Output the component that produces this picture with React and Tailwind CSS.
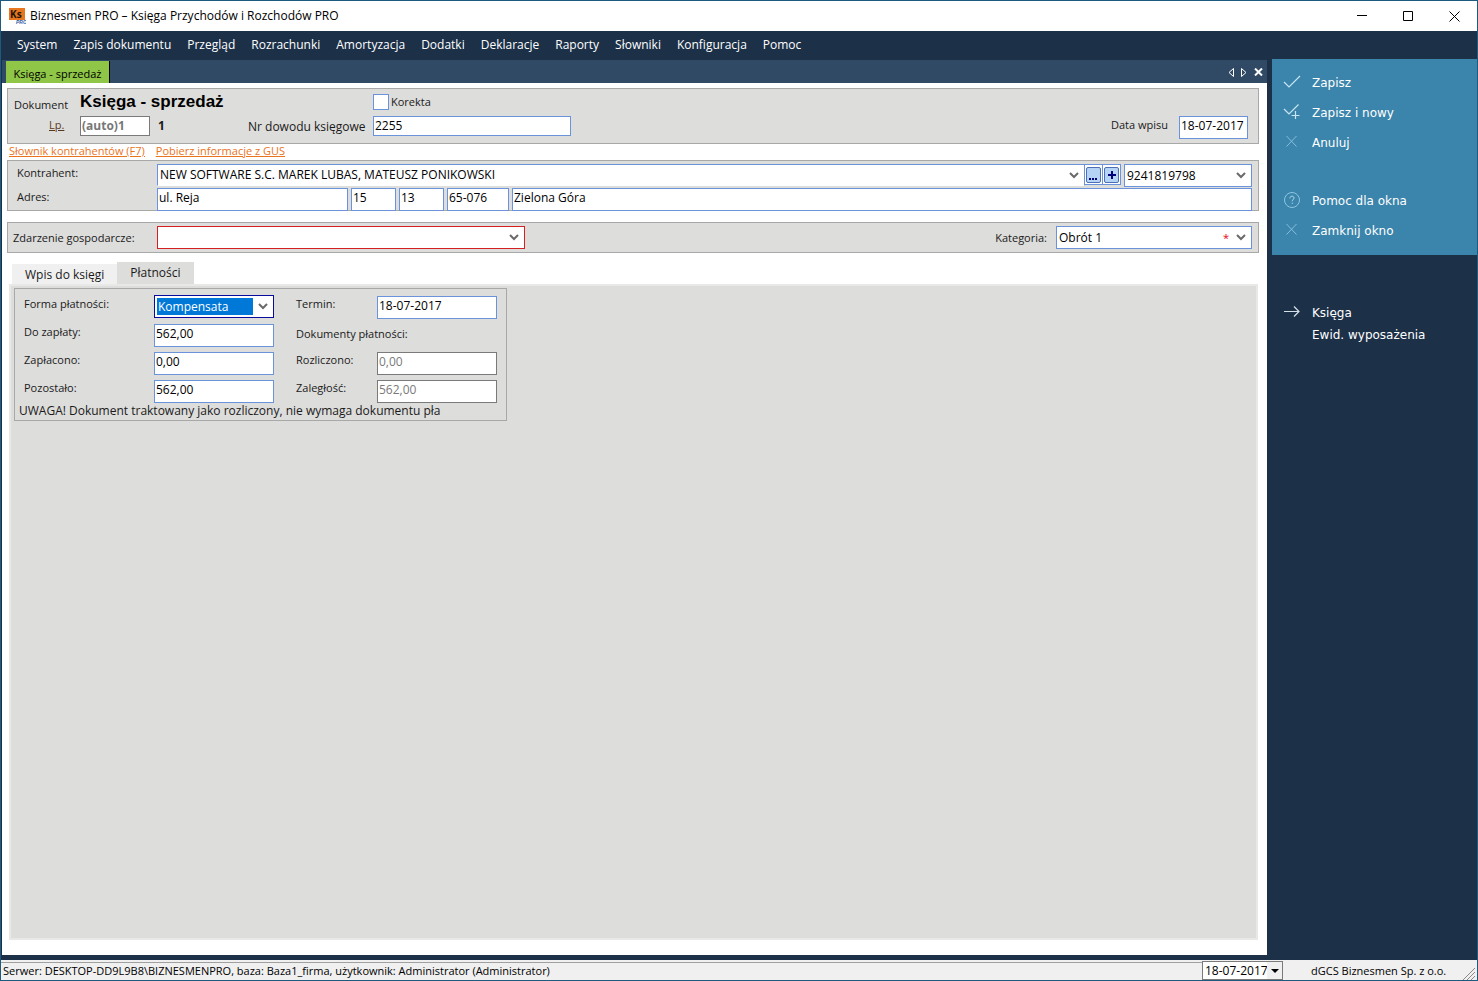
import { useState } from 'react';
import clsx from 'clsx';

const MENU = [
  'System', 'Zapis dokumentu', 'Przegląd', 'Rozrachunki', 'Amortyzacja', 'Dodatki',
  'Deklaracje', 'Raporty', 'Słowniki', 'Konfiguracja', 'Pomoc',
];

const ACTIONS = [
  { label: 'Zapisz', icon: 'check' },
  { label: 'Zapisz i nowy', icon: 'checkPlus' },
  { label: 'Anuluj', icon: 'cross' },
];

const WINDOW_ACTIONS = [
  { label: 'Pomoc dla okna', icon: 'help' },
  { label: 'Zamknij okno', icon: 'cross' },
];

function ActionIcon({ name }) {
  return (
    <svg width="18" height="18" viewBox="0 0 18 18" fill="none" stroke="currentColor" className="shrink-0">
      {name === 'check' && <path d="M1 8 L6 13 L17 2" stroke="#c8e6f4" strokeWidth="1.2" />}
      {name === 'checkPlus' && (
        <path d="M1 5 L6 10 L15.500 0.500 M12.500 7 V15 M8.500 11.500 H16.500" stroke="#c8e6f4" strokeWidth="1.2" />
      )}
      {name === 'cross' && <path d="M3.500 2 L13.500 12.500 M13.500 2 L3.500 12.500" stroke="#86bfdc" />}
      {name === 'help' && (
        <g stroke="#8cc6e2">
          <circle cx="9" cy="8" r="7.500" />
          <path d="M7 6.300 C7 4.700 8 4.200 9 4.200 C10.300 4.200 11 5 11 6 C11 7.500 9.200 7.500 9.200 9.300 M9.200 10.700 V11.900" stroke="#b5dcee" />
        </g>
      )}
      {name === 'arrow' && <path d="M1 7.500 H16 M11 2.500 L16 7.500 L11 12.500" stroke="#d5e0e8" strokeWidth="1.2" />}
    </svg>
  );
}

function Chevron() {
  return (
    <svg width="10" height="7" viewBox="0 0 10 7" className="pointer-events-none absolute top-1/2 right-1.5 -mt-1">
      <path d="M1 1 L5 5 L9 1" fill="none" stroke="#6a6a6a" strokeWidth="2" />
    </svg>
  );
}

function Field({ className, short, ...props }) {
  return (
    <input
      {...props}
      className={clsx(
        'min-w-0 border border-[#6a93dc] bg-white px-px text-[12px] text-black outline-none disabled:border-[#7a7a7a] disabled:text-[#7a7a7a]',
        short ? 'h-5 pb-0.5' : 'h-[23px] pb-1',
        className
      )}
    />
  );
}

function Select({ className, selectClass, children, star, ...props }) {
  return (
    <div className={clsx('relative flex text-[12px]', className)}>
      <select
        {...props}
        className={clsx('w-full appearance-none border bg-white pl-0.5 text-black outline-none', selectClass)}
      >
        {children}
      </select>
      {star && <span className="pointer-events-none absolute top-1 right-[23px] text-[11px] text-red-600">*</span>}
      <Chevron />
    </div>
  );
}

function Group({ className, children }) {
  return <section className={clsx('border border-[#a8a8a8] bg-[#dddddb]', className)}>{children}</section>;
}

function TitleBar() {
  return (
    <header className="flex h-[30px] shrink-0 items-center bg-white pl-2 text-[12px]">
      <svg width="17" height="17" viewBox="0 0 17 17" className="mr-1">
        <rect x="0" y="0" width="16" height="12" fill="#e8761f" />
        <text x="1" y="10" fontSize="10" fontWeight="bold" fontFamily="Open Sans, sans-serif" fill="#231408">Ks</text>
        <text x="7" y="16" fontSize="5" fontWeight="bold" fontStyle="italic" fontFamily="Liberation Sans, sans-serif" fill="#2b5aa8">PRO</text>
      </svg>
      <h1 className="flex-1 text-black">Biznesmen PRO – Księga Przychodów i Rozchodów PRO</h1>
      <button aria-label="Minimalizuj" className="flex h-full w-[46px] items-center justify-center">
        <svg width="10" height="10"><path d="M0 4.500 H10" stroke="#000" /></svg>
      </button>
      <button aria-label="Maksymalizuj" className="flex h-full w-[46px] items-center justify-center">
        <svg width="10" height="10"><path d="M.5 .5 H9.500 V9.500 H.5 Z" stroke="#000" fill="none" /></svg>
      </button>
      <button aria-label="Zamknij" className="flex h-full w-[46px] items-center justify-center">
        <svg width="11" height="11"><path d="M.5 .5 L10.500 10.500 M10.500 .5 L.5 10.500" stroke="#000" /></svg>
      </button>
    </header>
  );
}

function DocumentHeader() {
  return (
    <Group className="flex h-[56px] items-start pt-[3px] pr-2.5 pl-1.5">
      <div className="w-[66px]">
        <p className="mt-1 leading-[18px]">Dokument</p>
        <a href="#lp" className="ml-[35px] leading-[22px] text-[#5a3a1e] underline">Lp.</a>
      </div>
      <div className="w-[168px] text-[12px]">
        <h2 className="font-[Liberation_Sans,Arial,sans-serif] text-[17px] leading-5 font-bold text-black">Księga - sprzedaż</h2>
        <div className="mt-1 flex h-5 items-center gap-2">
          <input
            aria-label="Lp."
            defaultValue="(auto)1"
            className="h-5 w-[70px] border border-[#7a7a7a] bg-white px-px pb-0.5 font-bold text-[#777] outline-none"
          />
          <b>1</b>
        </div>
      </div>
      <label htmlFor="dowod" className="mt-[26px] w-[125px] text-[12px] leading-[18px]">Nr dowodu księgowe</label>
      <div>
        <label className="flex h-5 items-center gap-0.5">
          <input type="checkbox" className="size-4 appearance-none border border-[#6a93dc] bg-white checked:bg-[#6a93dc]" />
          Korekta
        </label>
        <Field id="dowod" short defaultValue="2255" className="mt-1 block w-[198px]" />
      </div>
      <div className="mt-6 ml-auto flex items-start gap-[11px]">
        <label htmlFor="data" className="leading-[18px]">Data wpisu</label>
        <Field id="data" defaultValue="18-07-2017" className="w-[69px]" />
      </div>
    </Group>
  );
}

function Contractor() {
  return (
    <Group className="grid h-[51px] grid-cols-[149px_1fr] gap-y-px pt-[3px] pr-1.5 leading-[18px]">
      <label htmlFor="kontrahent" className="pl-[9px]">Kontrahent:</label>
      <div className="flex h-[23px] gap-[3px]">
        <div className="flex min-w-0 flex-1">
          <Select id="kontrahent" className="flex-1" selectClass="h-[22px] border-[#6a93dc] border-b-white">
            <option>NEW SOFTWARE S.C. MAREK LUBAS, MATEUSZ PONIKOWSKI</option>
          </Select>
          <div className="flex h-[21px] w-9 shrink-0 items-center justify-around border border-l-0 border-[#6a93dc] bg-white">
            <button aria-label="Wybierz" className="flex h-4 w-[15px] items-end justify-center rounded-xs border border-[#4d6fb5] bg-[#b5d3f5]">
              <svg width="9" height="5"><path d="M0 1h2v2H0z M3 1h2v2H3z M6 1h2v2H6z" fill="#00007a" /></svg>
            </button>
            <span className="h-full w-px bg-[#6a93dc]" />
            <button aria-label="Dodaj" className="flex h-4 w-[15px] items-center justify-center rounded-xs border border-[#4d6fb5] bg-[#b5d3f5]">
              <svg width="8" height="8"><path d="M4 0V8M0 4H8" stroke="#00007a" strokeWidth="2" /></svg>
            </button>
          </div>
        </div>
        <Select aria-label="NIP" className="w-[128px]" selectClass="h-[23px] border-[#6a93dc]">
          <option>9241819798</option>
        </Select>
      </div>
      <label htmlFor="ulica" className="pl-[9px]">Adres:</label>
      <div className="flex gap-[3px]">
        <Field id="ulica" defaultValue="ul. Reja" className="w-[191px]" />
        <Field aria-label="Nr domu" defaultValue="15" className="w-[45px]" />
        <Field aria-label="Nr lokalu" defaultValue="13" className="w-[45px]" />
        <Field aria-label="Kod pocztowy" defaultValue="65-076" className="w-[62px]" />
        <Field aria-label="Miejscowość" defaultValue="Zielona Góra" className="flex-1" />
      </div>
    </Group>
  );
}

function Payments() {
  return (
    <Group className="h-[133px] w-[493px] pt-1.5 pl-[9px]">
      <div className="grid grid-cols-[130px_120px_22px_81px_120px] gap-y-1 leading-[18px]">
        <label htmlFor="forma">Forma płatności:</label>
        <div className="relative flex h-6 items-start text-[12px]">
          <select
            id="forma"
            className="h-[23px] w-full appearance-none border border-[#0a0a9c] bg-[#0078d7] bg-clip-content py-0.5 pr-[18px] pl-0.5 indent-px text-white outline-none [box-shadow:inset_0_0_0_2px_#fff,inset_-20px_0_0_0_#fff]"
          >
            <option>Kompensata</option>
          </select>
          <Chevron />
        </div>
        <span />
        <label htmlFor="termin">Termin:</label>
        <Field id="termin" defaultValue="18-07-2017" className="mt-px" />

        <label htmlFor="dozaplaty">Do zapłaty:</label>
        <Field id="dozaplaty" defaultValue="562,00" className="mt-px" />
        <span />
        <p className="col-span-2 mt-0.5">Dokumenty płatności:</p>

        <label htmlFor="zaplacono">Zapłacono:</label>
        <Field id="zaplacono" defaultValue="0,00" className="mt-px" />
        <span />
        <label htmlFor="rozliczono">Rozliczono:</label>
        <Field id="rozliczono" defaultValue="0,00" disabled className="mt-px" />

        <label htmlFor="pozostalo">Pozostało:</label>
        <Field id="pozostalo" defaultValue="562,00" className="mt-px" />
        <span />
        <label htmlFor="zaleglosc">Zaległość:</label>
        <Field id="zaleglosc" defaultValue="562,00" disabled className="mt-px" />
      </div>
      <p className="-ml-[5px] text-[12px] leading-4 whitespace-nowrap">
        UWAGA! Dokument traktowany jako rozliczony, nie wymaga dokumentu pła
      </p>
    </Group>
  );
}

function Sidebar() {
  const item = 'flex w-full items-center gap-[11px] pl-[11px] text-left';
  return (
    <aside className="w-[210px] shrink-0 pl-[5px] font-[DejaVu_Sans,Verdana,sans-serif] text-[12px] text-white">
      <div className="flex h-[196px] flex-col bg-[#3b84ab] pt-[9px]">
        {ACTIONS.map((a) => (
          <button key={a.label} className={clsx(item, 'h-[30px]')}>
            <ActionIcon name={a.icon} /> {a.label}
          </button>
        ))}
        <div className="h-7" />
        {WINDOW_ACTIONS.map((a) => (
          <button key={a.label} className={clsx(item, 'h-[30px]')}>
            <ActionIcon name={a.icon} /> {a.label}
          </button>
        ))}
      </div>
      <nav className="mt-[47px]">
        <a href="#ksiega" className={clsx(item, 'h-[22px]')}><ActionIcon name="arrow" /> Księga</a>
        <a href="#ewid" className={clsx(item, 'h-[22px]')}><span className="w-[18px]" /> Ewid. wyposażenia</a>
      </nav>
    </aside>
  );
}

function StatusBar() {
  return (
    <footer className="flex h-5 shrink-0 items-center bg-[#f0f0f0] text-black">
      <p className="mt-0.5 flex-1 self-stretch border-t border-[#a0a0a0] pl-0.5 leading-4">
        Serwer: DESKTOP-DD9L9B8\BIZNESMENPRO, baza: Baza1_firma, użytkownik: Administrator (Administrator)
      </p>
      <div className="relative mt-px h-[19px] w-[81px] border border-[#7a7a7a] text-[12px]">
        <select aria-label="Data robocza" className="h-full w-full appearance-none bg-white pl-0.5 outline-none">
          <option>18-07-2017</option>
        </select>
        <span className="pointer-events-none absolute inset-y-0 right-0 flex w-[15px] items-center justify-center bg-[#f0f0f0]">
          <svg width="8" height="4"><path d="M0 0H8L4 4Z" /></svg>
        </span>
      </div>
      <p className="mt-0.5 w-[180px] pl-[28px] leading-4 whitespace-nowrap">dGCS Biznesmen Sp. z o.o.</p>
      <svg width="12" height="12" className="mr-0.5 self-end" stroke="#8a8a8a">
        <path d="M0 12 L12 0 M4 12 L12 4 M8 12 L12 8" />
      </svg>
    </footer>
  );
}

export default function App() {
  const [tab, setTab] = useState('Płatności');

  return (
    <div className="flex h-screen flex-col border border-[#1c5a80] bg-[#1c3048] font-[Open_Sans,Noto_Sans,sans-serif] text-[11px] text-[#1a1a1a]">
      <TitleBar />
      <nav className="flex h-7 shrink-0 items-center gap-4 pl-4 text-[12px] text-white">
        {MENU.map((m) => <button key={m}>{m}</button>)}
      </nav>

      <div className="flex min-h-0 flex-1">
        <main className="mb-[5px] ml-px flex min-w-0 flex-1 flex-col pt-px">
          <div className="flex h-[23px] shrink-0 items-end bg-[#304a66] pr-1 pl-1">
            <button className="h-[22px] w-[104px] border-r border-black bg-[#8fc647] pt-1 whitespace-nowrap text-black">
              Księga - sprzedaż
            </button>
            <div className="ml-auto flex h-full items-center gap-[7px] pt-px">
              <button aria-label="Poprzednia"><svg width="6" height="9"><path d="M5.500 .5V8.500L1 4.500Z" fill="none" stroke="#fff" /></svg></button>
              <button aria-label="Następna"><svg width="6" height="9"><path d="M.5 .5V8.500L5 4.500Z" fill="none" stroke="#fff" /></svg></button>
              <button aria-label="Zamknij kartę"><svg width="9" height="8"><path d="M1 .5L8 7.500M8 .5L1 7.500" stroke="#fff" strokeWidth="2" /></svg></button>
            </div>
          </div>

          <div className="flex flex-1 flex-col bg-white pt-[5px] pr-2 pb-[15px] pl-[5px]">
            <DocumentHeader />
            <div className="flex h-4 gap-[11px] pl-0.5 leading-[14px] text-[#e8741e] underline">
              <a href="#slownik">Słownik kontrahentów (F7)</a>
              <a href="#gus">Pobierz informacje z GUS</a>
            </div>
            <Contractor />
            <Group className="mt-[11px] flex h-[31px] items-center pr-1.5">
              <label htmlFor="zdarzenie" className="w-[149px] pt-0.5 pl-[5px]">Zdarzenie gospodarcze:</label>
              <Select id="zdarzenie" className="w-[368px]" selectClass="h-[23px] border-[#d42020]">
                <option></option>
              </Select>
              <label htmlFor="kategoria" className="mr-[9px] ml-auto pt-0.5">Kategoria:</label>
              <Select id="kategoria" star className="w-[196px]" selectClass="h-[23px] border-[#6a93dc]">
                <option>Obrót 1</option>
              </Select>
            </Group>

            <div className="mt-[9px] flex h-[22px] items-end pl-[5px] text-[12px]" role="tablist">
              {['Wpis do księgi', 'Płatności'].map((t) => (
                <button
                  key={t}
                  role="tab"
                  aria-selected={tab === t}
                  onClick={() => setTab(t)}
                  className={clsx('px-[13px]', tab === t ? 'h-[22px] bg-[#dddddb]' : 'h-5 bg-[#f0f0f0] pt-0.5')}
                >
                  {t}
                </button>
              ))}
            </div>
            <div className="mr-px ml-0.5 flex-1 border-2 border-[#e8e8e6] bg-[#dddddb] pt-0.5 pl-[3px]">
              {tab === 'Płatności' && <Payments />}
            </div>
          </div>
        </main>
        <Sidebar />
      </div>
      <StatusBar />
    </div>
  );
}
